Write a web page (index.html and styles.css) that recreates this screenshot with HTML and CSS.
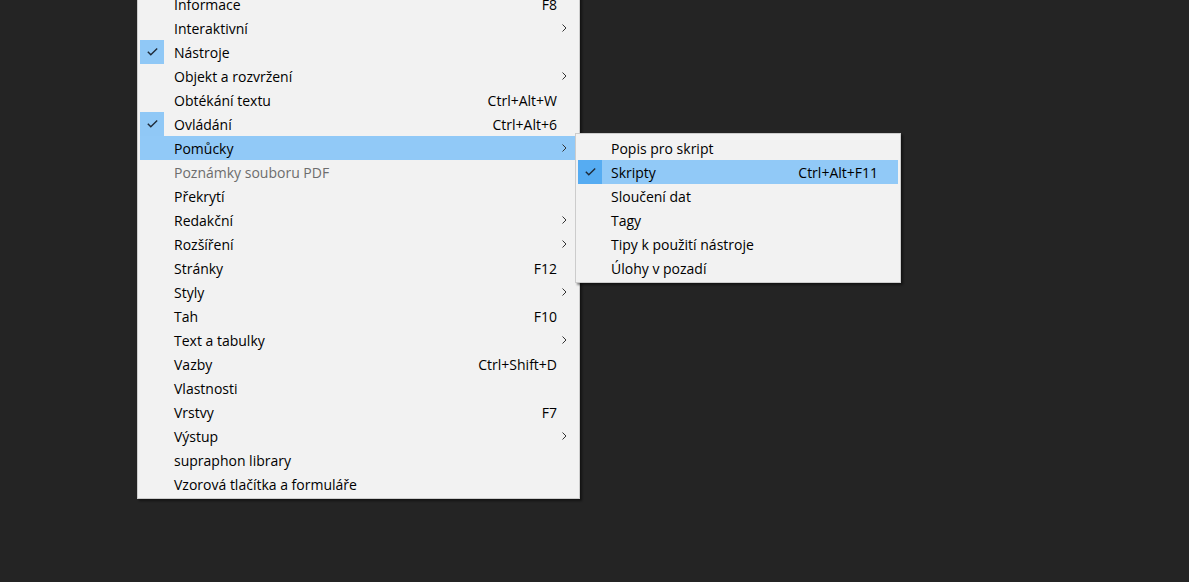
FILE: index.html
```html
<!DOCTYPE html>
<html lang="cs">
<head>
<meta charset="utf-8">
<title>Menu</title>
<link rel="stylesheet" href="styles.css">
</head>
<body>
<div class="desk">
  <ul class="menu main">
    <li class="item"><span class="chk"></span><span class="label">Informace</span><span class="key">F8</span><span class="sub"></span></li>
    <li class="item"><span class="chk"></span><span class="label">Interaktivní</span><span class="key"></span><span class="sub"><svg width="5" height="8" viewBox="0 0 5 8"><path d="M0.5 0.5 L4 4 L0.5 7.5" fill="none" stroke="#333" stroke-width="1"/></svg></span></li>
    <li class="item checked"><span class="chk"><svg width="11" height="8" viewBox="0 0 11 8"><path d="M0.8 3.8 L3.8 6.8 L10.2 0.6" fill="none" stroke="#1e2a38" stroke-width="1.4"/></svg></span><span class="label">Nástroje</span><span class="key"></span><span class="sub"></span></li>
    <li class="item"><span class="chk"></span><span class="label">Objekt a rozvržení</span><span class="key"></span><span class="sub"><svg width="5" height="8" viewBox="0 0 5 8"><path d="M0.5 0.5 L4 4 L0.5 7.5" fill="none" stroke="#333" stroke-width="1"/></svg></span></li>
    <li class="item"><span class="chk"></span><span class="label">Obtékání textu</span><span class="key">Ctrl+Alt+W</span><span class="sub"></span></li>
    <li class="item checked"><span class="chk"><svg width="11" height="8" viewBox="0 0 11 8"><path d="M0.8 3.8 L3.8 6.8 L10.2 0.6" fill="none" stroke="#1e2a38" stroke-width="1.4"/></svg></span><span class="label">Ovládání</span><span class="key">Ctrl+Alt+6</span><span class="sub"></span></li>
    <li class="item active"><span class="chk"></span><span class="label">Pomůcky</span><span class="key"></span><span class="sub"><svg width="5" height="8" viewBox="0 0 5 8"><path d="M0.5 0.5 L4 4 L0.5 7.5" fill="none" stroke="#333" stroke-width="1"/></svg></span></li>
    <li class="item disabled"><span class="chk"></span><span class="label">Poznámky souboru PDF</span><span class="key"></span><span class="sub"></span></li>
    <li class="item"><span class="chk"></span><span class="label">Překrytí</span><span class="key"></span><span class="sub"></span></li>
    <li class="item"><span class="chk"></span><span class="label">Redakční</span><span class="key"></span><span class="sub"><svg width="5" height="8" viewBox="0 0 5 8"><path d="M0.5 0.5 L4 4 L0.5 7.5" fill="none" stroke="#333" stroke-width="1"/></svg></span></li>
    <li class="item"><span class="chk"></span><span class="label">Rozšíření</span><span class="key"></span><span class="sub"><svg width="5" height="8" viewBox="0 0 5 8"><path d="M0.5 0.5 L4 4 L0.5 7.5" fill="none" stroke="#333" stroke-width="1"/></svg></span></li>
    <li class="item"><span class="chk"></span><span class="label">Stránky</span><span class="key">F12</span><span class="sub"></span></li>
    <li class="item"><span class="chk"></span><span class="label">Styly</span><span class="key"></span><span class="sub"><svg width="5" height="8" viewBox="0 0 5 8"><path d="M0.5 0.5 L4 4 L0.5 7.5" fill="none" stroke="#333" stroke-width="1"/></svg></span></li>
    <li class="item"><span class="chk"></span><span class="label">Tah</span><span class="key">F10</span><span class="sub"></span></li>
    <li class="item"><span class="chk"></span><span class="label">Text a tabulky</span><span class="key"></span><span class="sub"><svg width="5" height="8" viewBox="0 0 5 8"><path d="M0.5 0.5 L4 4 L0.5 7.5" fill="none" stroke="#333" stroke-width="1"/></svg></span></li>
    <li class="item"><span class="chk"></span><span class="label">Vazby</span><span class="key">Ctrl+Shift+D</span><span class="sub"></span></li>
    <li class="item"><span class="chk"></span><span class="label">Vlastnosti</span><span class="key"></span><span class="sub"></span></li>
    <li class="item"><span class="chk"></span><span class="label">Vrstvy</span><span class="key">F7</span><span class="sub"></span></li>
    <li class="item"><span class="chk"></span><span class="label">Výstup</span><span class="key"></span><span class="sub"><svg width="5" height="8" viewBox="0 0 5 8"><path d="M0.5 0.5 L4 4 L0.5 7.5" fill="none" stroke="#333" stroke-width="1"/></svg></span></li>
    <li class="item"><span class="chk"></span><span class="label">supraphon library</span><span class="key"></span><span class="sub"></span></li>
    <li class="item"><span class="chk"></span><span class="label">Vzorová tlačítka a formuláře</span><span class="key"></span><span class="sub"></span></li>
  </ul>

  <ul class="menu submenu">
    <li class="item"><span class="chk"></span><span class="label">Popis pro skript</span><span class="key"></span></li>
    <li class="item active checked"><span class="chk"><svg width="11" height="8" viewBox="0 0 11 8"><path d="M0.8 3.8 L3.8 6.8 L10.2 0.6" fill="none" stroke="#1e2a38" stroke-width="1.4"/></svg></span><span class="label">Skripty</span><span class="key">Ctrl+Alt+F11</span></li>
    <li class="item"><span class="chk"></span><span class="label">Sloučení dat</span><span class="key"></span></li>
    <li class="item"><span class="chk"></span><span class="label">Tagy</span><span class="key"></span></li>
    <li class="item"><span class="chk"></span><span class="label">Tipy k použití nástroje</span><span class="key"></span></li>
    <li class="item"><span class="chk"></span><span class="label">Úlohy v pozadí</span><span class="key"></span></li>
  </ul>
</div>
</body>
</html>
```

FILE: styles.css
```css
* { box-sizing: border-box; }
html, body {
  margin: 0;
  padding: 0;
  width: 1189px;
  height: 582px;
  overflow: hidden;
  background: #242424;
}
.desk {
  position: relative;
  width: 1189px;
  height: 582px;
  font-family: "Open Sans", "Noto Sans", sans-serif;
  font-size: 14px;
  color: #000;
}
.menu {
  list-style: none;
  margin: 0;
  background: #f2f2f2;
  border: 1px solid #cccccc;
  padding: 2px;
  box-shadow: 2px 2px 2px rgba(0, 0, 0, 0.45);
  display: flex;
  flex-direction: column;
}
.main {
  position: absolute;
  left: 137px;
  top: -11px;
  width: 443px;
}
.submenu {
  position: absolute;
  left: 575px;
  top: 133px;
  width: 326px;
}
.item {
  height: 24px;
  display: flex;
  align-items: center;
  white-space: nowrap;
}
.item.active { background: #91c9f7; }
.item.disabled .label { color: #6d6d6d; }
.chk {
  width: 24px;
  height: 24px;
  flex: none;
  display: flex;
  align-items: center;
  justify-content: center;
}
.item.checked .chk { background: #90c8f6; }
.item.checked.active .chk { background: #56acf2; }
.label {
  flex: 1;
  padding-left: 10px;
  padding-top: 1px;
  line-height: 23px;
}
.submenu .label { padding-left: 9px; }
.key {
  padding-top: 1px;
  line-height: 23px;
}
.sub {
  width: 20px;
  height: 24px;
  flex: none;
  display: flex;
  align-items: center;
  justify-content: flex-start;
  padding-left: 5px;
}
.submenu .key { padding-right: 20px; }
```
